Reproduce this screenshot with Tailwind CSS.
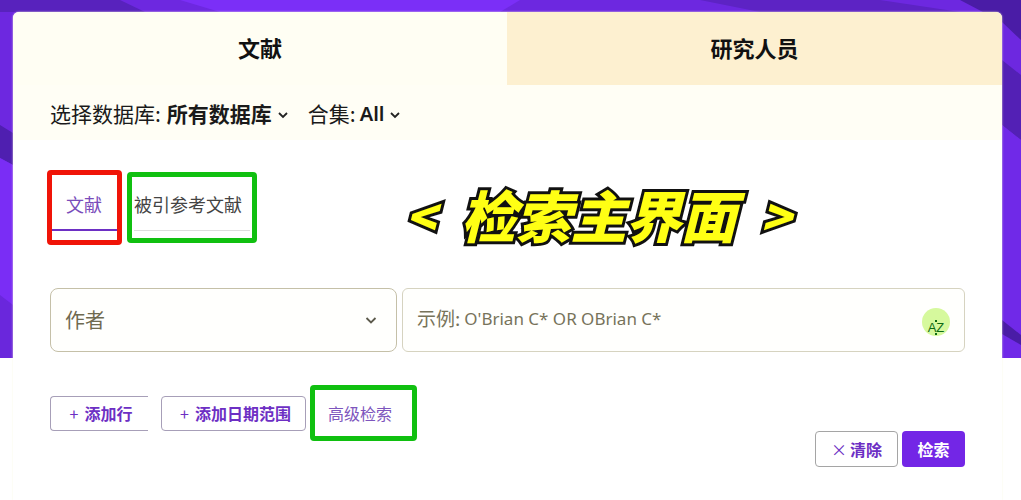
<!DOCTYPE html>
<html lang="zh">
<head>
    <meta charset="UTF-8">
    <title>检索主界面</title>
    <script src="https://cdn.jsdelivr.net/npm/@tailwindcss/browser@4"></script>
</head>
<body class="bg-white overflow-hidden font-['Noto_Sans_CJK_SC','Noto_Sans',sans-serif]">
    <div class="relative w-[1021px] h-[500px] overflow-hidden">
        <!-- purple backdrop -->
        <svg class="absolute left-0 top-0" width="1021" height="358" viewBox="0 0 1021 358">
            <rect width="1021" height="358" fill="#6d28e0"/>
            <path d="M0 0H120L145 12H0Z" fill="#5822bd"/>
            <path d="M0 125L13 133V165L0 158Z" fill="#4f1fb0"/>
            <path d="M0 158L13 165V358H0Z" fill="#7a2df5"/>
            <path d="M0 295L13 305V358H0Z" fill="#6a27dc"/>
            <path d="M180 0H520L500 12H220Z" fill="#7b2ff7"/>
            <path d="M700 0H880L960 12H760Z" fill="#5d23c4"/>
            <path d="M900 0H1021V40L1002 22L960 0Z" fill="#4a1ca6"/>
            <path d="M1002 60L1021 75V140L1002 125Z" fill="#5320b5"/>
            <path d="M1002 125L1021 140V358H1002Z" fill="#7029e8"/>
            <path d="M1002 320L1021 335V345L1002 334Z" fill="#4a1ca6"/>
        </svg>

        <div class="relative mt-3 mx-[13px] w-[989px] h-[488px] bg-white rounded-t-md shadow-[0_0_2px_#f5f5dc]">
            <div class="h-[73px] flex">
                <div class="w-[494px] bg-[#fffef3] rounded-tl-md flex items-center justify-center pb-[2px] text-[22px] font-bold text-[#111]">文献</div>
                <div class="w-[495px] bg-[#fdf0d0] rounded-tr-md flex items-center justify-center pb-[2px] text-[22px] font-bold text-[#111]">研究人员</div>
            </div>
            <div class="h-[55px] bg-[#fffef5] pl-[37px] pt-[2px] flex items-center text-[#1a1a1a] text-[21px]">
                <span>选择数据库:</span>
                <span class="ml-[6px] font-bold">所有数据库</span>
                <svg class="ml-[5px] mt-[2px]" width="12" height="12" viewBox="0 0 12 12" fill="none" stroke="#222" stroke-width="1.8"><path d="M2 4l4 4 4-4"/></svg>
                <span class="ml-[19px]">合集:</span>
                <span class="ml-[4px] text-[20px] font-['Noto_Sans'] font-semibold">All</span>
                <svg class="ml-[5px] mt-[2px]" width="12" height="12" viewBox="0 0 12 12" fill="none" stroke="#222" stroke-width="1.8"><path d="M2 4l4 4 4-4"/></svg>
            </div>

            <div class="pl-[38px] pt-[41px] flex text-[18px] h-[148px] items-start">
                <div class="w-[66px] h-[50px] border-b-2 border-[#6d2fc4] text-center leading-[46px] text-[#7a4dbb]">文献</div>
                <div class="ml-[17px] w-[116px] h-[50px] border-b border-[#ddd] leading-[46px] text-[#444] whitespace-nowrap">被引参考文献</div>
            </div>

            <div class="px-[37px] flex gap-[5px]">
                <div class="w-[347px] h-[64px] border-[1.5px] border-[#c5c0a8] rounded-lg bg-[#fffffd] flex items-center justify-between pl-[14px] pr-[18px] text-[20px] text-[#6f6a50]">
                    <span>作者</span>
                    <svg width="14" height="14" viewBox="0 0 14 14" fill="none" stroke="#5c5a4c" stroke-width="1.8"><path d="M2.5 5l4.5 4.500L11.500 5"/></svg>
                </div>
                <div class="relative w-[563px] h-[64px] border border-[#d6d3c0] rounded-md bg-[#fffffd] flex items-center pl-[14px] pb-[3px] text-[#77735a] whitespace-nowrap">
                    <span class="text-[19px]">示例:</span>
                    <span class="ml-[4px] text-[17px] font-['Noto_Sans',sans-serif]">O'Brian C* OR OBrian C*</span>
                    <div class="absolute left-[519px] top-[19px] w-[28px] h-[28px] rounded-full bg-[#d6f99d] flex items-center justify-center pt-[11px] text-[13px] leading-none text-[#0f6b14] font-['Liberation_Sans',sans-serif]">
                        AZ
                        <span class="absolute left-[13px] top-[12px] w-[2px] h-[2px] bg-[#0f6b14]"></span>
                        <span class="absolute left-[13px] top-[25px] w-[2px] h-[2px] bg-[#0f6b14]"></span>
                    </div>
                </div>
            </div>

            <div class="pl-[37px] pt-[44px] flex items-center gap-[13px]">
                <div class="w-[98px] h-[35px] border border-[#a79fb8] border-r-0 rounded-l flex items-center justify-center pl-[3px] pb-[2px] text-[16px] font-bold text-[#6d2fc4]"><span class="mr-[6px] font-normal">+</span>添加行</div>
                <div class="w-[145px] h-[35px] border border-[#a79fb8] rounded flex items-center justify-center pl-[4px] pb-[2px] text-[16px] font-bold text-[#6d2fc4]"><span class="mr-[6px] font-normal">+</span>添加日期范围</div>
                <div class="ml-[9px] pb-[2px] text-[16px] text-[#7d55bd]">高级检索</div>
            </div>

            <div class="pr-[37px] flex justify-end gap-[4px]">
                <div class="w-[83px] h-[36px] border border-[#a5a5a5] rounded flex items-center justify-center text-[16px] font-bold text-[#6d2fc4]"><span class="mr-[3px] font-normal">×</span>清除</div>
                <div class="w-[63px] h-[36px] bg-[#7326e6] rounded flex items-center justify-center text-[16px] font-bold text-white">检索</div>
            </div>
        </div>

        <!-- annotation overlays -->
        <div class="absolute left-[47px] top-[170px] w-[75px] h-[75px] border-[5px] border-[#f01408] rounded"></div>
        <div class="absolute left-[127px] top-[172px] w-[130px] h-[71px] border-[5px] border-[#10c010] rounded"></div>
        <div class="absolute left-[310px] top-[385px] w-[107px] h-[56px] border-[5px] border-[#10c010] rounded"></div>
        <div class="absolute left-[405px] top-[176px] w-[386px] h-[76px] flex items-center justify-between whitespace-nowrap font-black text-[#ffff14] italic [-webkit-text-stroke:6px_#111] [paint-order:stroke_fill]">
            <span class="text-[50px]">&lt;</span>
            <span class="text-[56px] tracking-[-1px]">检索主界面</span>
            <span class="text-[50px]">&gt;</span>
        </div>
    </div>
</body>
</html>
